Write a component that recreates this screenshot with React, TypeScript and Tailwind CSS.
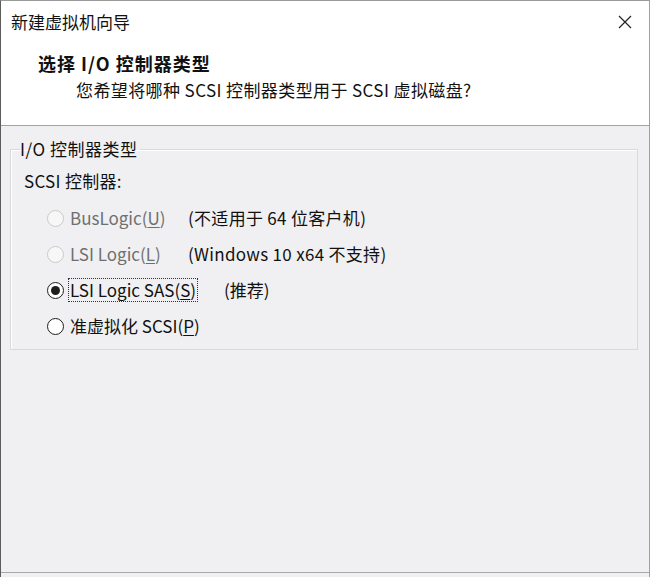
import React from "react"

type Option = {
  label: string
  mnemonic: string
  rest?: string
  note?: string
  disabled?: boolean
  checked?: boolean
  focused?: boolean
}

const options: Option[] = [
  { label: "BusLogic(", mnemonic: "U", rest: ")", note: "(不适用于 64 位客户机)", disabled: true },
  { label: "LSI Logic(", mnemonic: "L", rest: ")", note: "(Windows 10 x64 不支持)", disabled: true },
  { label: "LSI Logic SAS(", mnemonic: "S", rest: ")", note: "(推荐)", checked: true, focused: true },
  { label: "准虚拟化 SCSI(", mnemonic: "P", rest: ")" },
]

function Radio({ checked, disabled }: { checked?: boolean; disabled?: boolean }) {
  if (disabled) {
    return (
      <span className="w-[17px] h-[17px] shrink-0 rounded-full border border-[#c9c9c9] bg-[#f7f7f7]" />
    )
  }
  return (
    <span className="w-[17px] h-[17px] shrink-0 rounded-full border-[1.5px] border-[#1e1e1e] bg-white flex items-center justify-center">
      {checked && <span className="w-[9px] h-[9px] rounded-full bg-[#1e1e1e]" />}
    </span>
  )
}

function OptionRow({ opt }: { opt: Option }) {
  const labelBox = (
    <span
      className={
        "px-[1px] leading-[22px] whitespace-nowrap border border-dotted " +
        (opt.focused ? "border-[#333]" : "border-transparent") +
        (opt.disabled ? " text-[#6f6f6f]" : " text-[#111]")
      }
    >
      {opt.label}
      <span className="underline underline-offset-2">{opt.mnemonic}</span>
      {opt.rest}
    </span>
  )

  return (
    <div className="h-[36px] flex items-center ml-[27px] whitespace-nowrap">
      <Radio checked={opt.checked} disabled={opt.disabled} />
      <div className="ml-[4px] flex items-center">
        {opt.focused ? (
          <>
            {labelBox}
            <span className="ml-[26px] text-[#111]">{opt.note}</span>
          </>
        ) : opt.note ? (
          <>
            <span className="w-[120px] flex">{labelBox}</span>
            <span className="text-[#111] tracking-[0.3px]">{opt.note}</span>
          </>
        ) : (
          labelBox
        )}
      </div>
    </div>
  )
}

export default function App() {
  return (
    <div className="w-[650px] h-[577px] flex flex-col bg-[#f0f0f2] border-t border-t-[#9a9a9a] border-l border-l-[#5c5c5c] border-r border-r-[#a0a0a0] font-['Noto_Sans_CJK_SC','Noto_Sans',sans-serif] text-[17px] text-[#111] select-none">
      {/* title bar + header */}
      <div className="bg-white border-b border-[#a3a3a3]">
        <div className="h-[41px] flex items-center justify-between pl-[10px] pr-[17px]">
          <span className="text-[17px] leading-[24px]">新建虚拟机向导</span>
          <svg width="14" height="14" viewBox="0 0 14 14" className="text-[#222]">
            <path d="M1 1 L13 13 M13 1 L1 13" stroke="currentColor" strokeWidth="1.2" fill="none" />
          </svg>
        </div>
        <div className="h-[83px] pt-[9px]">
          <div className="pl-[37px] text-[18px] leading-[24px] font-bold tracking-[1px]">选择 I/O 控制器类型</div>
          <div className="pl-[75px] mt-[3px] leading-[24px] tracking-[0.4px]">
            您希望将哪种 SCSI 控制器类型用于 SCSI 虚拟磁盘?
          </div>
        </div>
      </div>

      {/* body */}
      <div className="flex-1 pt-[12px]">
        <fieldset className="ml-[9px] w-[628px] border border-[#d9d9d9] shadow-[inset_1px_1px_0_#ffffff] px-[9px] pb-[5px]">
          <legend className="pr-[3px] leading-[22px] tracking-[0.5px]">I/O 控制器类型</legend>
          <div className="ml-[4px] mt-[10px] leading-[22px] tracking-[0.3px]">SCSI 控制器:</div>
          <div className="mt-[8px]">
            {options.map((o) => (
              <OptionRow key={o.label} opt={o} />
            ))}
          </div>
        </fieldset>
      </div>

      {/* button area edge */}
      <div className="h-[5px] border-t border-[#a8a8a8] bg-[#f0f0f2]" />
    </div>
  )
}
